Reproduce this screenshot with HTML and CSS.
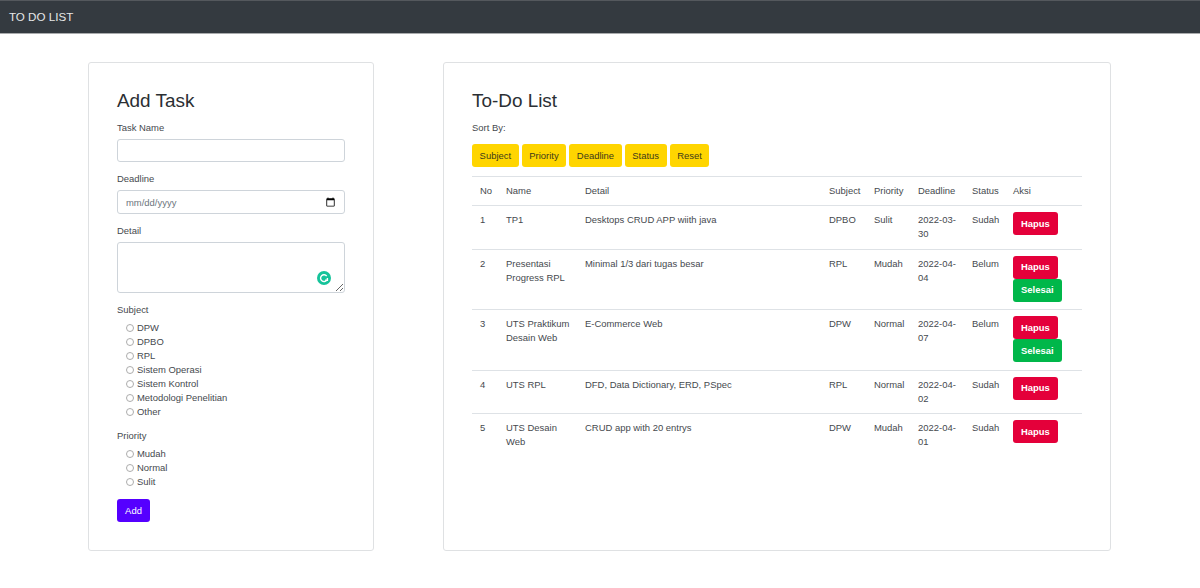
FILE: index.html
```html
<!DOCTYPE html>
<html lang="en">
<head>
	<link rel="stylesheet" href="styles.css">
	<meta charset="UTF-8">
	<meta name="viewport" content="width=device-width, initial-scale=1.0">
	<title>To Do List</title>
</head>
<body>

<nav class="navbar">TO DO LIST</nav>

<div class="content">
	<section class="card formCard">
		<h3>Add Task</h3>
		<form>
			<label class="fieldLabel" for="taskName">Task Name</label>
			<input class="field fieldText" type="text" id="taskName">

			<label class="fieldLabel" for="deadline">Deadline</label>
			<input class="field fieldDate" type="date" id="deadline">

			<label class="fieldLabel" for="detail">Detail</label>
			<div class="detailWrap">
				<textarea class="field fieldArea" id="detail"></textarea>
				<svg class="grammarly" width="14" height="14" viewBox="0 0 14 14">
					<circle cx="7" cy="7" r="7" fill="#15c39a"/>
					<path d="M9.7 5.1A3.4 3.4 0 1 0 9.9 8.8M10.4 6.9V9.2H8.1" fill="none" stroke="#fff" stroke-width="1.4"/>
				</svg>
			</div>

			<div class="fieldLabel">Subject</div>
			<ul class="radioList">
				<li><label><input type="radio" name="subject">DPW</label></li>
				<li><label><input type="radio" name="subject">DPBO</label></li>
				<li><label><input type="radio" name="subject">RPL</label></li>
				<li><label><input type="radio" name="subject">Sistem Operasi</label></li>
				<li><label><input type="radio" name="subject">Sistem Kontrol</label></li>
				<li><label><input type="radio" name="subject">Metodologi Penelitian</label></li>
				<li><label><input type="radio" name="subject">Other</label></li>
			</ul>

			<div class="fieldLabel">Priority</div>
			<ul class="radioList">
				<li><label><input type="radio" name="priority">Mudah</label></li>
				<li><label><input type="radio" name="priority">Normal</label></li>
				<li><label><input type="radio" name="priority">Sulit</label></li>
			</ul>

			<button class="btn btnAdd" type="button">Add</button>
		</form>
	</section>

	<section class="card listCard">
		<h3>To-Do List</h3>
		<div class="fieldLabel">Sort By:</div>
		<div class="sortButtons">
			<button class="btn btnSort" type="button">Subject</button>
			<button class="btn btnSort" type="button">Priority</button>
			<button class="btn btnSort" type="button">Deadline</button>
			<button class="btn btnSort" type="button">Status</button>
			<button class="btn btnSort" type="button">Reset</button>
		</div>
		<table id="taskTable">
			<colgroup>
				<col class="colNo"><col class="colName"><col class="colDetail"><col class="colSubject">
				<col class="colPriority"><col class="colDeadline"><col class="colStatus"><col class="colAksi">
			</colgroup>
			<thead>
				<tr>
					<th>No</th><th>Name</th><th>Detail</th><th>Subject</th>
					<th>Priority</th><th>Deadline</th><th>Status</th><th>Aksi</th>
				</tr>
			</thead>
			<tbody>
				<tr>
					<td>1</td><td>TP1</td><td>Desktops CRUD APP wiith java</td><td>DPBO</td>
					<td>Sulit</td><td>2022-03-30</td><td>Sudah</td>
					<td><button class="btn btnDelete" type="button">Hapus</button></td>
				</tr>
				<tr>
					<td>2</td><td>Presentasi Progress RPL</td><td>Minimal 1/3 dari tugas besar</td><td>RPL</td>
					<td>Mudah</td><td>2022-04-04</td><td>Belum</td>
					<td><button class="btn btnDelete" type="button">Hapus</button><button class="btn btnDone" type="button">Selesai</button></td>
				</tr>
				<tr>
					<td>3</td><td>UTS Praktikum Desain Web</td><td>E-Commerce Web</td><td>DPW</td>
					<td>Normal</td><td>2022-04-07</td><td>Belum</td>
					<td><button class="btn btnDelete" type="button">Hapus</button><button class="btn btnDone" type="button">Selesai</button></td>
				</tr>
				<tr>
					<td>4</td><td>UTS RPL</td><td>DFD, Data Dictionary, ERD, PSpec</td><td>RPL</td>
					<td>Normal</td><td>2022-04-02</td><td>Sudah</td>
					<td><button class="btn btnDelete" type="button">Hapus</button></td>
				</tr>
				<tr>
					<td>5</td><td>UTS Desain Web</td><td>CRUD app with 20 entrys</td><td>DPW</td>
					<td>Mudah</td><td>2022-04-01</td><td>Sudah</td>
					<td><button class="btn btnDelete" type="button">Hapus</button></td>
				</tr>
			</tbody>
		</table>
	</section>
</div>

</body>
</html>
```

FILE: styles.css
```css
* {
	box-sizing: border-box;
}

body {
	margin: 0;
	font-family: "Liberation Sans", Arial, sans-serif;
	font-size: 9.45px;
	line-height: 14px;
	color: #45494e;
	background-color: #fff;
}

.navbar {
	height: 34px;
	padding: 8px 9px 0;
	font-size: 11.6px;
	line-height: 16px;
	color: #e6e7e8;
	background-color: #343a40;
	border-top: 1px solid #54585d;
	border-bottom: 1px solid #a9abad;
}

.content {
	display: flex;
	gap: 69px;
	padding: 28px 89px 0 88px;
}

.card {
	height: 489px;
	padding: 28px 28px 0;
	background-color: #fff;
	border: 1px solid #dfe1e3;
	border-radius: 3px;
}

.formCard {
	width: 286px;
}

.listCard {
	flex: 1;
}

h3 {
	margin: 0 0 10px;
	font-size: 18.9px;
	font-weight: 400;
	line-height: 20px;
	color: #2b2f33;
}

.fieldLabel {
	display: block;
	margin-bottom: 4px;
}

.field {
	display: block;
	width: 228px;
	margin-bottom: 10px;
	padding: 4px 8px;
	font-family: inherit;
	font-size: 9.45px;
	color: #6c757d;
	background-color: #fff;
	border: 1px solid #ced4da;
	border-radius: 3px;
	outline: none;
}

.fieldText {
	height: 23px;
}

.fieldDate {
	height: 24px;
}

.fieldDate::-webkit-datetime-edit-fields-wrapper,
.fieldDate::-webkit-datetime-edit-text,
.fieldDate::-webkit-datetime-edit-month-field,
.fieldDate::-webkit-datetime-edit-day-field,
.fieldDate::-webkit-datetime-edit-year-field {
	padding: 0;
}

.fieldDate::-webkit-calendar-picker-indicator {
	width: 11px;
	height: 11px;
	padding: 0;
	margin: 0;
}

.detailWrap {
	position: relative;
	height: 51px;
	margin-bottom: 10px;
}

.fieldArea {
	height: 51px;
	margin: 0;
}

.grammarly {
	position: absolute;
	right: 14px;
	bottom: 8px;
}

.radioList {
	margin: 0 0 10px;
	padding: 0 0 0 9px;
	list-style: none;
}

.radioList li {
	height: 14px;
}

.radioList label {
	display: flex;
	align-items: center;
}

.radioList input {
	width: 8px;
	height: 8px;
	margin: 0 3px 0 0;
	opacity: 0.6;
}

.btn {
	display: block;
	height: 23px;
	padding: 0 8px;
	font-family: inherit;
	font-size: 9.45px;
	line-height: 14px;
	border: none;
	border-radius: 3px;
}

.btnAdd {
	width: 33px;
	padding: 0;
	color: #fff;
	background-color: #5500ff;
}

.sortButtons {
	display: flex;
	gap: 3px;
	margin: 9px 0 9px;
}

.btnSort {
	padding: 0 7.6px;
	color: #3d3a1a;
	background-color: #ffd500;
}

table {
	width: 610px;
	border-collapse: collapse;
	table-layout: fixed;
}

th, td {
	padding: 7px 6px 7px 8px;
	font-weight: 400;
	text-align: left;
	vertical-align: top;
	border-top: 1px solid #dee2e6;
}

td {
	padding-bottom: 7.5px;
}

.colNo { width: 26px; }
.colName { width: 79px; }
.colDetail { width: 244px; }
.colSubject { width: 45px; }
.colPriority { width: 44px; }
.colDeadline { width: 54px; }
.colStatus { width: 41px; }
.colAksi { width: 77px; }

.btnDelete,
.btnDone {
	color: #fff;
	font-weight: 700;
}

.btnDelete {
	margin-top: -1px;
	background-color: #e4003a;
}

.btnDone {
	background-color: #00b74a;
}
```
